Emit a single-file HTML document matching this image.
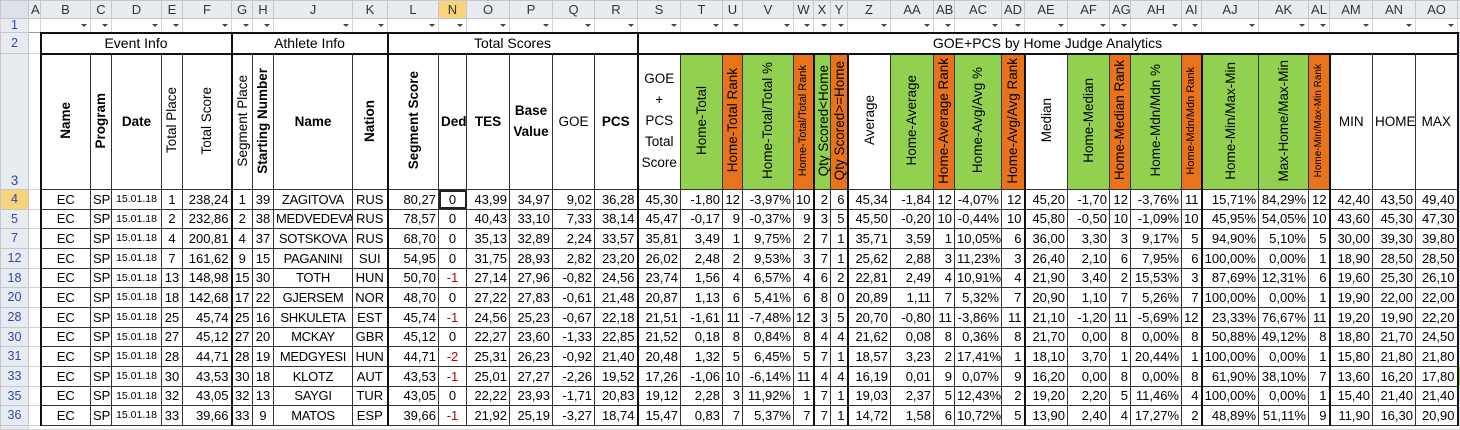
<!DOCTYPE html>
<html><head><meta charset="utf-8"><style>
*{box-sizing:border-box;margin:0;padding:0}
body{width:1460px;height:429px;overflow:hidden;background:#fff;font-family:"Liberation Sans",Arial,sans-serif;font-size:13px;color:#000}
table{border-collapse:collapse;table-layout:fixed;width:1460px}
td{white-space:nowrap;overflow:hidden;padding:0 2px;text-align:right;vertical-align:middle;border:1px solid #333;line-height:1}
tr.hd td{background:#e8ecf1;border:1px solid #c3c8ce;color:#333;text-align:center;font-size:13px;height:18px}
tr.hd td.sel{background:#f9d37a}
tr.f1 td{height:14px;border:1px solid #d4d4d4;border-bottom:1px solid #999;position:relative}
tr.f1 td.dd::after{content:"";position:absolute;right:3px;top:5px;border-left:3px solid transparent;border-right:3px solid transparent;border-top:3px solid #444}
td.rn{background:#e8ecf1;border:1px solid #c3c8ce;color:#2e49a8;text-align:center;font-size:12.5px}
td.rn.sel{background:#f9d37a}
td.a{border:1px solid #d4d4d4;border-right:1px solid #333}
td.x{border:1px solid #d4d4d4;background:#e8ecf1}
tr.r2 td.g2{height:21px;text-align:center;font-size:14px;border-top:2px solid #111;border-bottom:2px solid #111}
tr.r3 td{height:136px;text-align:center;font-size:13.5px}
tr.d td{height:19.67px}
.c{text-align:center!important}
.b{font-weight:bold}
.L{border-left:2px solid #111!important}
.R{border-right:2px solid #111!important}
.g{background:#92d050}
.o{background:#e8731a}
.v{display:inline-block;writing-mode:vertical-rl;transform:rotate(180deg);white-space:nowrap}
.sm{font-size:11px}
.xs{font-size:10px}
.dt{font-size:10.5px;text-align:center!important}
.nm{letter-spacing:-0.3px}
.red{color:#c00000}
.selc{outline:2px solid #222;outline-offset:-2px}
tr.last td{height:4px;border:1px solid #d4d4d4}
</style></head><body>
<table>
<colgroup>
<col style="width:28px"><col style="width:12px"><col style="width:50px"><col style="width:21px"><col style="width:50px"><col style="width:21px"><col style="width:49px"><col style="width:21px"><col style="width:21px"><col style="width:79px"><col style="width:35px"><col style="width:51px"><col style="width:28px"><col style="width:43px"><col style="width:43px"><col style="width:42px"><col style="width:43px"><col style="width:43px"><col style="width:42px"><col style="width:20px"><col style="width:51px"><col style="width:20px"><col style="width:17px"><col style="width:17px"><col style="width:43px"><col style="width:43px"><col style="width:21px"><col style="width:47px"><col style="width:23px"><col style="width:43px"><col style="width:42px"><col style="width:21px"><col style="width:51px"><col style="width:20px"><col style="width:57px"><col style="width:50px"><col style="width:21px"><col style="width:43px"><col style="width:43px"><col style="width:42px"><col style="width:3px">
</colgroup>
<tr class="hd"><td style="background:#dde2e8"></td><td>A</td><td>B</td><td>C</td><td>D</td><td>E</td><td>F</td><td>G</td><td>H</td><td>J</td><td>K</td><td>L</td><td class="sel">N</td><td>O</td><td>P</td><td>Q</td><td>R</td><td>S</td><td>T</td><td>U</td><td>V</td><td>W</td><td>X</td><td>Y</td><td>Z</td><td>AA</td><td>AB</td><td>AC</td><td>AD</td><td>AE</td><td>AF</td><td>AG</td><td>AH</td><td>AI</td><td>AJ</td><td>AK</td><td>AL</td><td>AM</td><td>AN</td><td>AO</td><td></td></tr>
<tr class="f1"><td class="rn" style="border-bottom:1px solid #c3c8ce">1</td><td></td><td class="dd"></td><td class="dd"></td><td class="dd"></td><td class="dd"></td><td class="dd"></td><td class="dd"></td><td class="dd"></td><td class="dd"></td><td class="dd"></td><td class="dd"></td><td class="dd"></td><td class="dd"></td><td class="dd"></td><td class="dd"></td><td class="dd"></td><td class="dd"></td><td class="dd"></td><td class="dd"></td><td class="dd"></td><td class="dd"></td><td class="dd"></td><td class="dd"></td><td class="dd"></td><td class="dd"></td><td class="dd"></td><td class="dd"></td><td class="dd"></td><td class="dd"></td><td class="dd"></td><td class="dd"></td><td class="dd"></td><td class="dd"></td><td class="dd"></td><td class="dd"></td><td class="dd"></td><td class="dd"></td><td class="dd"></td><td class="dd"></td><td></td></tr>
<tr class="r2"><td class="rn">2</td><td class="a"></td><td class="g2 L R" colspan="5">Event Info</td><td class="g2 R" colspan="4">Athlete Info</td><td class="g2 R" colspan="6">Total Scores</td><td class="g2 R" colspan="23">GOE+PCS by Home Judge Analytics</td><td class="x"></td></tr>
<tr class="r3"><td class="rn" style="vertical-align:bottom;padding-bottom:2px">3</td><td class="a"></td>
<td class="L b"><span class="v">Name</span></td>
<td class="b"><span class="v">Program</span></td>
<td class="b">Date</td>
<td><span class="v">Total Place</span></td>
<td><span class="v">Total Score</span></td>
<td class="L"><span class="v">Segment Place</span></td>
<td class="b"><span class="v">Starting Number</span></td>
<td class="b">Name</td>
<td class="b"><span class="v">Nation</span></td>
<td class="L b"><span class="v">Segment Score</span></td>
<td class="b">Ded</td>
<td class="b">TES</td>
<td class="b" style="white-space:normal;line-height:1.55">Base Value</td>
<td>GOE</td>
<td class="b">PCS</td>
<td class="L" style="white-space:normal;line-height:1.55;font-size:13.5px">GOE<br>+<br>PCS<br>Total<br>Score</td>
<td class="g"><span class="v">Home-Total</span></td>
<td class="o"><span class="v">Home-Total Rank</span></td>
<td class="g"><span class="v">Home-Total/Total %</span></td>
<td class="o"><span class="v sm">Home-Total/Total Rank</span></td>
<td class="g L"><span class="v">Qty Scored&lt;Home</span></td>
<td class="o"><span class="v">Qty Scored&gt;=Home</span></td>
<td class="L"><span class="v">Average</span></td>
<td class="g"><span class="v">Home-Average</span></td>
<td class="o"><span class="v">Home-Average Rank</span></td>
<td class="g"><span class="v">Home-Avg/Avg %</span></td>
<td class="o"><span class="v">Home-Avg/Avg Rank</span></td>
<td class="L"><span class="v">Median</span></td>
<td class="g"><span class="v">Home-Median</span></td>
<td class="o"><span class="v">Home-Median Rank</span></td>
<td class="g"><span class="v">Home-Mdn/Mdn %</span></td>
<td class="o"><span class="v sm">Home-Mdn/Mdn Rank</span></td>
<td class="g L"><span class="v">Home-Min/Max-Min</span></td>
<td class="g"><span class="v">Max-Home/Max-Min</span></td>
<td class="o"><span class="v xs">Home-Min/Max-Min Rank</span></td>
<td class="L">MIN</td><td>HOME</td><td class="R">MAX</td><td class="x"></td></tr>

<tr class="d"><td class="rn sel">4</td><td class="a"></td><td class="c L">EC</td><td class="c">SP</td><td class="dt">15.01.18</td><td class="c">1</td><td>238,24</td><td class="c L">1</td><td class="c">39</td><td class="c nm">ZAGITOVA</td><td class="c">RUS</td><td class="L">80,27</td><td class="c selc">0</td><td>43,99</td><td>34,97</td><td>9,02</td><td>36,28</td><td class="L">45,30</td><td>-1,80</td><td>12</td><td>-3,97%</td><td>10</td><td class="L">2</td><td>6</td><td class="L">45,34</td><td>-1,84</td><td>12</td><td>-4,07%</td><td>12</td><td class="L">45,20</td><td>-1,70</td><td>12</td><td>-3,76%</td><td>11</td><td class="L">15,71%</td><td>84,29%</td><td>12</td><td class="L">42,40</td><td>43,50</td><td class="R">49,40</td><td class="x"></td></tr>
<tr class="d"><td class="rn">5</td><td class="a"></td><td class="c L">EC</td><td class="c">SP</td><td class="dt">15.01.18</td><td class="c">2</td><td>232,86</td><td class="c L">2</td><td class="c">38</td><td class="c nm">MEDVEDEVA</td><td class="c">RUS</td><td class="L">78,57</td><td class="c">0</td><td>40,43</td><td>33,10</td><td>7,33</td><td>38,14</td><td class="L">45,47</td><td>-0,17</td><td>9</td><td>-0,37%</td><td>9</td><td class="L">3</td><td>5</td><td class="L">45,50</td><td>-0,20</td><td>10</td><td>-0,44%</td><td>10</td><td class="L">45,80</td><td>-0,50</td><td>10</td><td>-1,09%</td><td>10</td><td class="L">45,95%</td><td>54,05%</td><td>10</td><td class="L">43,60</td><td>45,30</td><td class="R">47,30</td><td class="x"></td></tr>
<tr class="d"><td class="rn">7</td><td class="a"></td><td class="c L">EC</td><td class="c">SP</td><td class="dt">15.01.18</td><td class="c">4</td><td>200,81</td><td class="c L">4</td><td class="c">37</td><td class="c nm">SOTSKOVA</td><td class="c">RUS</td><td class="L">68,70</td><td class="c">0</td><td>35,13</td><td>32,89</td><td>2,24</td><td>33,57</td><td class="L">35,81</td><td>3,49</td><td>1</td><td>9,75%</td><td>2</td><td class="L">7</td><td>1</td><td class="L">35,71</td><td>3,59</td><td>1</td><td>10,05%</td><td>6</td><td class="L">36,00</td><td>3,30</td><td>3</td><td>9,17%</td><td>5</td><td class="L">94,90%</td><td>5,10%</td><td>5</td><td class="L">30,00</td><td>39,30</td><td class="R">39,80</td><td class="x"></td></tr>
<tr class="d"><td class="rn">12</td><td class="a"></td><td class="c L">EC</td><td class="c">SP</td><td class="dt">15.01.18</td><td class="c">7</td><td>161,62</td><td class="c L">9</td><td class="c">15</td><td class="c nm">PAGANINI</td><td class="c">SUI</td><td class="L">54,95</td><td class="c">0</td><td>31,75</td><td>28,93</td><td>2,82</td><td>23,20</td><td class="L">26,02</td><td>2,48</td><td>2</td><td>9,53%</td><td>3</td><td class="L">7</td><td>1</td><td class="L">25,62</td><td>2,88</td><td>3</td><td>11,23%</td><td>3</td><td class="L">26,40</td><td>2,10</td><td>6</td><td>7,95%</td><td>6</td><td class="L">100,00%</td><td>0,00%</td><td>1</td><td class="L">18,90</td><td>28,50</td><td class="R">28,50</td><td class="x"></td></tr>
<tr class="d"><td class="rn">18</td><td class="a"></td><td class="c L">EC</td><td class="c">SP</td><td class="dt">15.01.18</td><td class="c">13</td><td>148,98</td><td class="c L">15</td><td class="c">30</td><td class="c nm">TOTH</td><td class="c">HUN</td><td class="L">50,70</td><td class="c red">-1</td><td>27,14</td><td>27,96</td><td>-0,82</td><td>24,56</td><td class="L">23,74</td><td>1,56</td><td>4</td><td>6,57%</td><td>4</td><td class="L">6</td><td>2</td><td class="L">22,81</td><td>2,49</td><td>4</td><td>10,91%</td><td>4</td><td class="L">21,90</td><td>3,40</td><td>2</td><td>15,53%</td><td>3</td><td class="L">87,69%</td><td>12,31%</td><td>6</td><td class="L">19,60</td><td>25,30</td><td class="R">26,10</td><td class="x"></td></tr>
<tr class="d"><td class="rn">20</td><td class="a"></td><td class="c L">EC</td><td class="c">SP</td><td class="dt">15.01.18</td><td class="c">18</td><td>142,68</td><td class="c L">17</td><td class="c">22</td><td class="c nm">GJERSEM</td><td class="c">NOR</td><td class="L">48,70</td><td class="c">0</td><td>27,22</td><td>27,83</td><td>-0,61</td><td>21,48</td><td class="L">20,87</td><td>1,13</td><td>6</td><td>5,41%</td><td>6</td><td class="L">8</td><td>0</td><td class="L">20,89</td><td>1,11</td><td>7</td><td>5,32%</td><td>7</td><td class="L">20,90</td><td>1,10</td><td>7</td><td>5,26%</td><td>7</td><td class="L">100,00%</td><td>0,00%</td><td>1</td><td class="L">19,90</td><td>22,00</td><td class="R">22,00</td><td class="x"></td></tr>
<tr class="d"><td class="rn">28</td><td class="a"></td><td class="c L">EC</td><td class="c">SP</td><td class="dt">15.01.18</td><td class="c">25</td><td>45,74</td><td class="c L">25</td><td class="c">16</td><td class="c nm">SHKULETA</td><td class="c">EST</td><td class="L">45,74</td><td class="c red">-1</td><td>24,56</td><td>25,23</td><td>-0,67</td><td>22,18</td><td class="L">21,51</td><td>-1,61</td><td>11</td><td>-7,48%</td><td>12</td><td class="L">3</td><td>5</td><td class="L">20,70</td><td>-0,80</td><td>11</td><td>-3,86%</td><td>11</td><td class="L">21,10</td><td>-1,20</td><td>11</td><td>-5,69%</td><td>12</td><td class="L">23,33%</td><td>76,67%</td><td>11</td><td class="L">19,20</td><td>19,90</td><td class="R">22,20</td><td class="x"></td></tr>
<tr class="d"><td class="rn">30</td><td class="a"></td><td class="c L">EC</td><td class="c">SP</td><td class="dt">15.01.18</td><td class="c">27</td><td>45,12</td><td class="c L">27</td><td class="c">20</td><td class="c nm">MCKAY</td><td class="c">GBR</td><td class="L">45,12</td><td class="c">0</td><td>22,27</td><td>23,60</td><td>-1,33</td><td>22,85</td><td class="L">21,52</td><td>0,18</td><td>8</td><td>0,84%</td><td>8</td><td class="L">4</td><td>4</td><td class="L">21,62</td><td>0,08</td><td>8</td><td>0,36%</td><td>8</td><td class="L">21,70</td><td>0,00</td><td>8</td><td>0,00%</td><td>8</td><td class="L">50,88%</td><td>49,12%</td><td>8</td><td class="L">18,80</td><td>21,70</td><td class="R">24,50</td><td class="x"></td></tr>
<tr class="d"><td class="rn">31</td><td class="a"></td><td class="c L">EC</td><td class="c">SP</td><td class="dt">15.01.18</td><td class="c">28</td><td>44,71</td><td class="c L">28</td><td class="c">19</td><td class="c nm">MEDGYESI</td><td class="c">HUN</td><td class="L">44,71</td><td class="c red">-2</td><td>25,31</td><td>26,23</td><td>-0,92</td><td>21,40</td><td class="L">20,48</td><td>1,32</td><td>5</td><td>6,45%</td><td>5</td><td class="L">7</td><td>1</td><td class="L">18,57</td><td>3,23</td><td>2</td><td>17,41%</td><td>1</td><td class="L">18,10</td><td>3,70</td><td>1</td><td>20,44%</td><td>1</td><td class="L">100,00%</td><td>0,00%</td><td>1</td><td class="L">15,80</td><td>21,80</td><td class="R">21,80</td><td class="x"></td></tr>
<tr class="d"><td class="rn">33</td><td class="a"></td><td class="c L">EC</td><td class="c">SP</td><td class="dt">15.01.18</td><td class="c">30</td><td>43,53</td><td class="c L">30</td><td class="c">18</td><td class="c nm">KLOTZ</td><td class="c">AUT</td><td class="L">43,53</td><td class="c red">-1</td><td>25,01</td><td>27,27</td><td>-2,26</td><td>19,52</td><td class="L">17,26</td><td>-1,06</td><td>10</td><td>-6,14%</td><td>11</td><td class="L">4</td><td>4</td><td class="L">16,19</td><td>0,01</td><td>9</td><td>0,07%</td><td>9</td><td class="L">16,20</td><td>0,00</td><td>8</td><td>0,00%</td><td>8</td><td class="L">61,90%</td><td>38,10%</td><td>7</td><td class="L">13,60</td><td>16,20</td><td class="R">17,80</td><td class="x" style="background:#92d050"></td></tr>
<tr class="d"><td class="rn">35</td><td class="a"></td><td class="c L">EC</td><td class="c">SP</td><td class="dt">15.01.18</td><td class="c">32</td><td>43,05</td><td class="c L">32</td><td class="c">13</td><td class="c nm">SAYGI</td><td class="c">TUR</td><td class="L">43,05</td><td class="c">0</td><td>22,22</td><td>23,93</td><td>-1,71</td><td>20,83</td><td class="L">19,12</td><td>2,28</td><td>3</td><td>11,92%</td><td>1</td><td class="L">7</td><td>1</td><td class="L">19,03</td><td>2,37</td><td>5</td><td>12,43%</td><td>2</td><td class="L">19,20</td><td>2,20</td><td>5</td><td>11,46%</td><td>4</td><td class="L">100,00%</td><td>0,00%</td><td>1</td><td class="L">15,40</td><td>21,40</td><td class="R">21,40</td><td class="x"></td></tr>
<tr class="d"><td class="rn">36</td><td class="a"></td><td class="c L">EC</td><td class="c">SP</td><td class="dt">15.01.18</td><td class="c">33</td><td>39,66</td><td class="c L">33</td><td class="c">9</td><td class="c nm">MATOS</td><td class="c">ESP</td><td class="L">39,66</td><td class="c red">-1</td><td>21,92</td><td>25,19</td><td>-3,27</td><td>18,74</td><td class="L">15,47</td><td>0,83</td><td>7</td><td>5,37%</td><td>7</td><td class="L">7</td><td>1</td><td class="L">14,72</td><td>1,58</td><td>6</td><td>10,72%</td><td>5</td><td class="L">13,90</td><td>2,40</td><td>4</td><td>17,27%</td><td>2</td><td class="L">48,89%</td><td>51,11%</td><td>9</td><td class="L">11,90</td><td>16,30</td><td class="R">20,90</td><td class="x"></td></tr>
<tr class="last"><td class="rn"></td><td colspan="40"></td></tr>
</table>
</body></html>
